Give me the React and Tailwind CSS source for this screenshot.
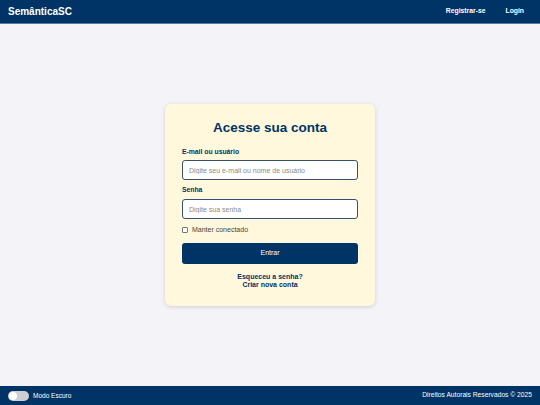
import React from 'react';

const App = () => {
  return (
    <div className="flex flex-col min-h-[405px] bg-[#f3f3f8] text-[#003366]" style={{ fontFamily: '"Liberation Sans", Arial, sans-serif' }}>
      {/* Header */}
      <header className="flex items-center justify-between h-6 px-2 bg-[#003366] border-b border-[#5b7aa3]">
        <span className="text-[10px] font-bold text-white">SemânticaSC</span>
        <nav className="flex items-center gap-[20px] pr-2 text-[6.8px] font-bold text-white">
          <a href="#">Registrar-se</a>
          <a href="#">Login</a>
        </nav>
      </header>

      {/* Main */}
      <main className="flex flex-1 items-center justify-center">
        <div className="w-[210px] px-[17px] pt-[16px] pb-[17px] bg-[#fff8dc] rounded-md shadow-[0_1px_4px_rgba(0,0,0,0.15)]">
          <h1 className="text-center text-[13.5px] leading-[16px] font-bold text-[#003366] mb-[12px]">Acesse sua conta</h1>

          <label className="block text-[6.8px] leading-[8px] font-bold text-[#003366] mb-[4px]">E-mail ou usuário</label>
          <input
            type="text"
            placeholder="Digite seu e-mail ou nome de usuário"
            className="block w-full h-[20px] px-[6px] text-[7px] bg-white border border-[#34526f] rounded-[3px] placeholder:text-[#8a8a8a] mb-[6px] outline-none"
          />

          <label className="block text-[6.8px] leading-[8px] font-bold text-[#003366] mb-[5px]">Senha</label>
          <input
            type="password"
            placeholder="Digite sua senha"
            className="block w-full h-[20px] px-[6px] text-[7px] bg-white border border-[#34526f] rounded-[3px] placeholder:text-[#8a8a8a] mb-[7px] outline-none"
          />

          <div className="flex items-center gap-[4px] h-[8px] mb-[9px]">
            <span className="w-[6px] h-[6px] bg-white border border-[#777] rounded-[1px]"></span>
            <span className="text-[7px] leading-[8px] text-[#444]">Manter conectado</span>
          </div>

          <button className="block w-full h-[21px] bg-[#003366] text-white text-[7px] rounded-[3px] mb-[9px]">Entrar</button>

          <div className="flex flex-col items-center text-[7px] font-bold leading-[8px] text-[#003366]">
            <a href="#">Esqueceu a senha?</a>
            <a href="#">Criar nova conta</a>
          </div>
        </div>
      </main>

      {/* Footer */}
      <footer className="flex items-center justify-between h-[19px] px-2 bg-[#003366]">
        <div className="flex items-center gap-[4px]">
          <span className="relative w-[21px] h-[10px] rounded-full bg-[#cfcfcf]">
            <span className="absolute left-[1px] top-[1px] w-[8px] h-[8px] rounded-full bg-white"></span>
          </span>
          <span className="text-[6.5px] text-white">Modo Escuro</span>
        </div>
        <span className="text-[6.7px] text-white">Direitos Autorais Reservados © 2025</span>
      </footer>
    </div>
  );
};

export default App;
